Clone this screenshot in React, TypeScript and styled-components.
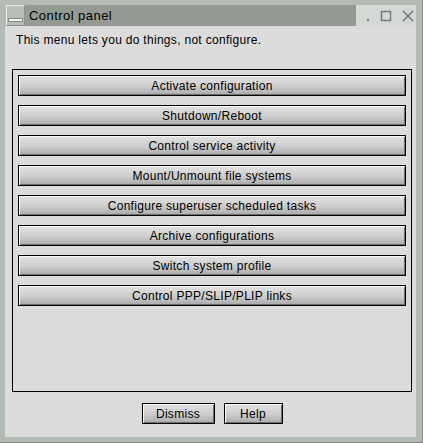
import styled, { createGlobalStyle } from "styled-components";

const GlobalStyle = createGlobalStyle`
	html, body {
		margin: 0;
		padding: 0;
		background: #dcdcdc;
	}
	body {
		font-family: "Liberation Sans", Arial, sans-serif;
		font-size: 12px;
		letter-spacing: 0.3px;
		color: #000;
	}
`;

const actions = [
	"Activate configuration",
	"Shutdown/Reboot",
	"Control service activity",
	"Mount/Unmount file systems",
	"Configure superuser scheduled tasks",
	"Archive configurations",
	"Switch system profile",
	"Control PPP/SLIP/PLIP links",
];

export default function App() {
	return (
		<>
			<GlobalStyle />
			<Window>
				<TitleBar>
					<MenuButton>
						<MenuBar />
					</MenuButton>
					<Title>Control panel</Title>
					<Controls>
						<svg width="60" height="21" viewBox="0 0 60 21">
							<rect x="11" y="14" width="2" height="2" fill="#777" />
							<rect x="25.5" y="6.5" width="9" height="9" fill="none" stroke="#7a7a7a" strokeWidth="1.5" />
							<path d="M47 6 L57 16 M57 6 L47 16" stroke="#6a6a6a" strokeWidth="1.3" />
						</svg>
					</Controls>
				</TitleBar>
				<Body>
					<Intro>This menu lets you do things, not configure.</Intro>
					<GroupBox>
						{actions.map((label) => (
							<ActionButton key={label} $wide>
								{label}
							</ActionButton>
						))}
					</GroupBox>
					<Footer>
						<ActionButton $w={73}>Dismiss</ActionButton>
						<ActionButton $w={59}>Help</ActionButton>
					</Footer>
				</Body>
			</Window>
		</>
	);
}

const Window = styled.div`
	width: 423px;
	height: 443px;
	box-sizing: border-box;
	background: #b4bbb4;
	padding: 5px 6px 5px 5px;
	display: flex;
	flex-direction: column;
	border-right: 1px solid #8f968f;
	border-bottom: 1px solid #7d847d;
`;

const TitleBar = styled.div`
	height: 21px;
	display: flex;
	align-items: stretch;
`;

const MenuButton = styled.div`
	width: 19px;
	box-sizing: border-box;
	margin-left: 1px;
	background: #b6beb6;
	border: 1px solid #e8ece8;
	border-right-color: #8a918a;
	border-bottom-color: #8a918a;
	display: flex;
	align-items: flex-end;
	justify-content: center;
	padding-bottom: 3px;
`;

const MenuBar = styled.div`
	width: 13px;
	height: 2px;
	background: #f4f4f4;
	border: 1px solid #888;
`;

const Title = styled.div`
	flex: 1;
	background: #939b93;
	padding-left: 4px;
	font-size: 13px;
	letter-spacing: 0.45px;
	line-height: 21px;
	color: #000;
`;

const Controls = styled.div`
	width: 60px;
	background: #d6dad6;
	display: flex;
`;

const Body = styled.div`
	flex: 1;
	background: #dcdcdc;
	display: flex;
	flex-direction: column;
	padding: 0 4px 0 7px;
`;

const Intro = styled.div`
	height: 43px;
	padding: 7px 0 0 4px;
	box-sizing: border-box;
	line-height: 15px;
`;

const GroupBox = styled.div`
	height: 323px;
	box-sizing: border-box;
	border: 1px solid #000;
	padding: 5px;
	display: flex;
	flex-direction: column;
	gap: 9px;
`;

const Footer = styled.div`
	flex: 1;
	display: flex;
	justify-content: center;
	align-items: flex-start;
	gap: 9px;
	padding-top: 11px;
`;

const ActionButton = styled.div<{ $w?: number; $wide?: boolean }>`
	width: ${(p) => (p.$wide ? "auto" : `${p.$w}px`)};
	height: 21px;
	box-sizing: border-box;
	border: 1px solid #000;
	background: linear-gradient(to bottom, #e2e2e2 0%, #cdcdcd 55%, #a9a9a9 100%);
	box-shadow: inset 1px 1px 0 #fafafa, inset -1px -1px 0 #6e6e6e;
	display: flex;
	align-items: center;
	justify-content: center;
	font-size: 12px;
	line-height: 1;
	color: #000;
`;
